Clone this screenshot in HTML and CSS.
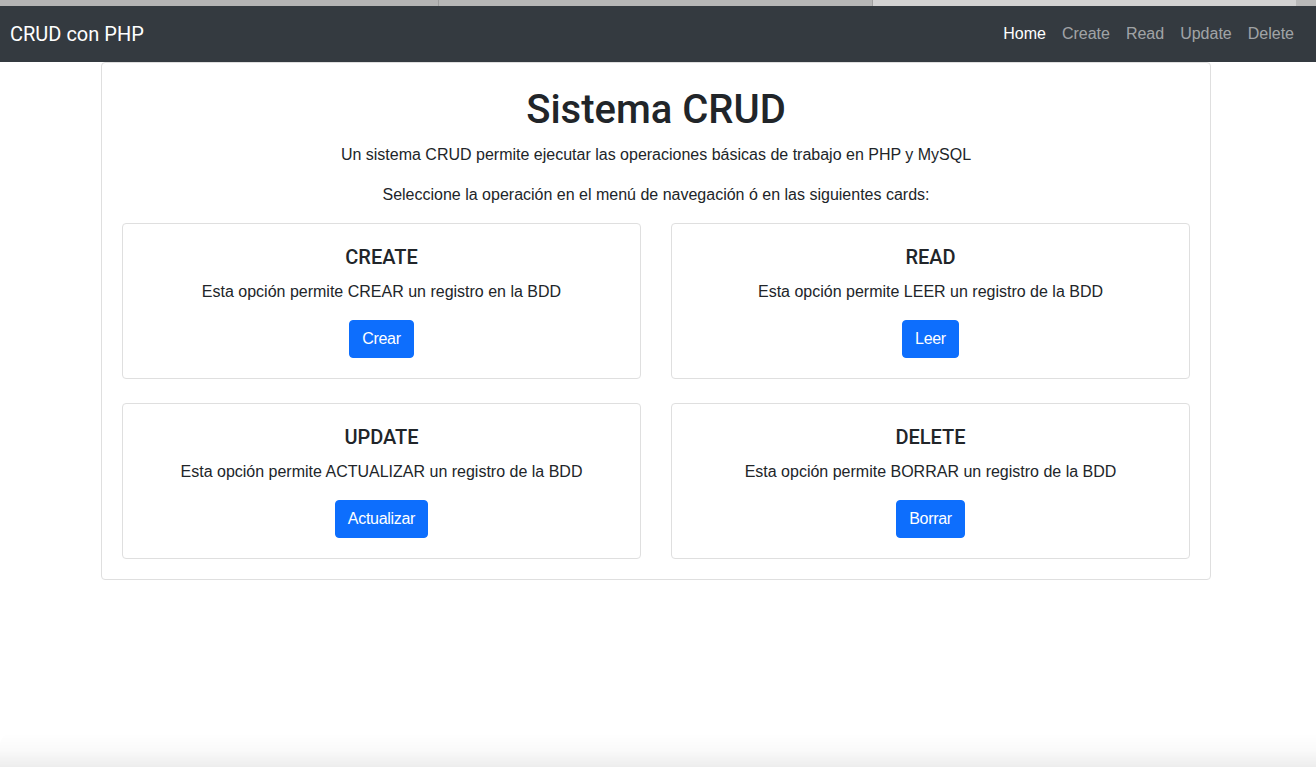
FILE: index.html
```html
<!DOCTYPE html>
<html lang="es">
<head>
<meta charset="utf-8">
<title>CRUD con PHP</title>
<link rel="stylesheet" href="styles.css">
</head>
<body>
<div class="tabstrip">
  <div class="tab t1"></div>
  <div class="tab t2"></div>
  <div class="tab t3"></div>
  <div class="tab t4"></div>
</div>
<nav class="navbar">
  <a class="brand" href="#">CRUD con PHP</a>
  <ul class="nav">
    <li><a class="nav-link active" href="#">Home</a></li>
    <li><a class="nav-link" href="#">Create</a></li>
    <li><a class="nav-link" href="#">Read</a></li>
    <li><a class="nav-link" href="#">Update</a></li>
    <li><a class="nav-link" href="#">Delete</a></li>
  </ul>
</nav>
<main class="container">
  <section class="main-card">
    <h1 class="title">Sistema CRUD</h1>
    <p class="lead">Un sistema CRUD permite ejecutar las operaciones básicas de trabajo en PHP y MySQL</p>
    <p class="lead">Seleccione la operación en el menú de navegación ó en las siguientes cards:</p>
    <div class="grid">
      <div class="card">
        <h5 class="card-title">CREATE</h5>
        <p class="card-text">Esta opción permite CREAR un registro en la BDD</p>
        <a class="btn" href="#">Crear</a>
      </div>
      <div class="card">
        <h5 class="card-title">READ</h5>
        <p class="card-text">Esta opción permite LEER un registro de la BDD</p>
        <a class="btn" href="#">Leer</a>
      </div>
      <div class="card">
        <h5 class="card-title">UPDATE</h5>
        <p class="card-text">Esta opción permite ACTUALIZAR un registro de la BDD</p>
        <a class="btn" href="#">Actualizar</a>
      </div>
      <div class="card">
        <h5 class="card-title">DELETE</h5>
        <p class="card-text">Esta opción permite BORRAR un registro de la BDD</p>
        <a class="btn" href="#">Borrar</a>
      </div>
    </div>
  </section>
</main>
<div class="bottom-shade"></div>
</body>
</html>
```
FILE: styles.css
```css
* { box-sizing: border-box; }
html, body { margin: 0; padding: 0; }
body {
  font-family: "Liberation Sans", Arial, sans-serif;
  font-size: 16px;
  line-height: 1.5;
  color: #212529;
  background: #fff;
  height: 767px;
  overflow: hidden;
}
.tabstrip { display: flex; height: 6px; }
.tab { height: 6px; }
.t1 { width: 439px; background: #b4b4b4; border-right: 1px solid #9d9d9d; }
.t2 { width: 434px; background: #b6b6b6; border-right: 1px solid #a0a0a0; }
.t3 { width: 423px; background: #d2d2d2; }
.t4 { flex: 1; background: #b9b9b9; }

.navbar {
  height: 56px;
  background: #343a40;
  display: flex;
  align-items: center;
  justify-content: space-between;
  padding: 0 14px 0 10px;
}
.brand {
  color: #fff;
  font-family: Roboto, "Liberation Sans", sans-serif;
  font-size: 20px;
  line-height: 30px;
  text-decoration: none;
}
.nav { list-style: none; margin: 0; padding: 0; display: flex; }
.nav-link {
  display: block;
  padding: 8px 8px;
  color: rgba(255,255,255,0.55);
  text-decoration: none;
  font-size: 16px;
  line-height: 24px;
}
.nav-link.active { color: #fff; }

.container { width: 1110px; margin-left: 101px; }
.main-card {
  border: 1px solid #dfdfdf;
  border-radius: 4px;
  padding: 20px;
  text-align: center;
}
.title {
  margin: 3px 0 9px;
  font-family: Roboto, "Liberation Sans", sans-serif;
  font-size: 40px;
  line-height: 48px;
  font-weight: 500;
}
.lead { margin: 0 0 16px; }
.grid {
  display: grid;
  grid-template-columns: 1fr 1fr;
  column-gap: 30px;
  row-gap: 24px;
}
.card {
  border: 1px solid #dfdfdf;
  border-radius: 4px;
  padding: 20px;
  height: 156px;
}
.card-title {
  margin: 1px 0 11px;
  font-family: Roboto, "Liberation Sans", sans-serif;
  font-size: 20px;
  line-height: 24px;
  font-weight: 500;
}
.card-text { margin: 0 0 16px; }
.btn {
  display: inline-block;
  background: #0d6efd;
  color: #fff;
  text-decoration: none;
  padding: 6px 12px;
  line-height: 24px;
  border: 1px solid #0d6efd;
  border-radius: 4px;
  letter-spacing: -0.3px;
}
.bottom-shade {
  position: fixed;
  left: 0; right: 0; bottom: 0;
  height: 34px;
  background: linear-gradient(to bottom, rgba(0,0,0,0) 0%, rgba(0,0,0,0.02) 50%, rgba(0,0,0,0.07) 100%);
  border-top-left-radius: 12px;
  pointer-events: none;
}
```
